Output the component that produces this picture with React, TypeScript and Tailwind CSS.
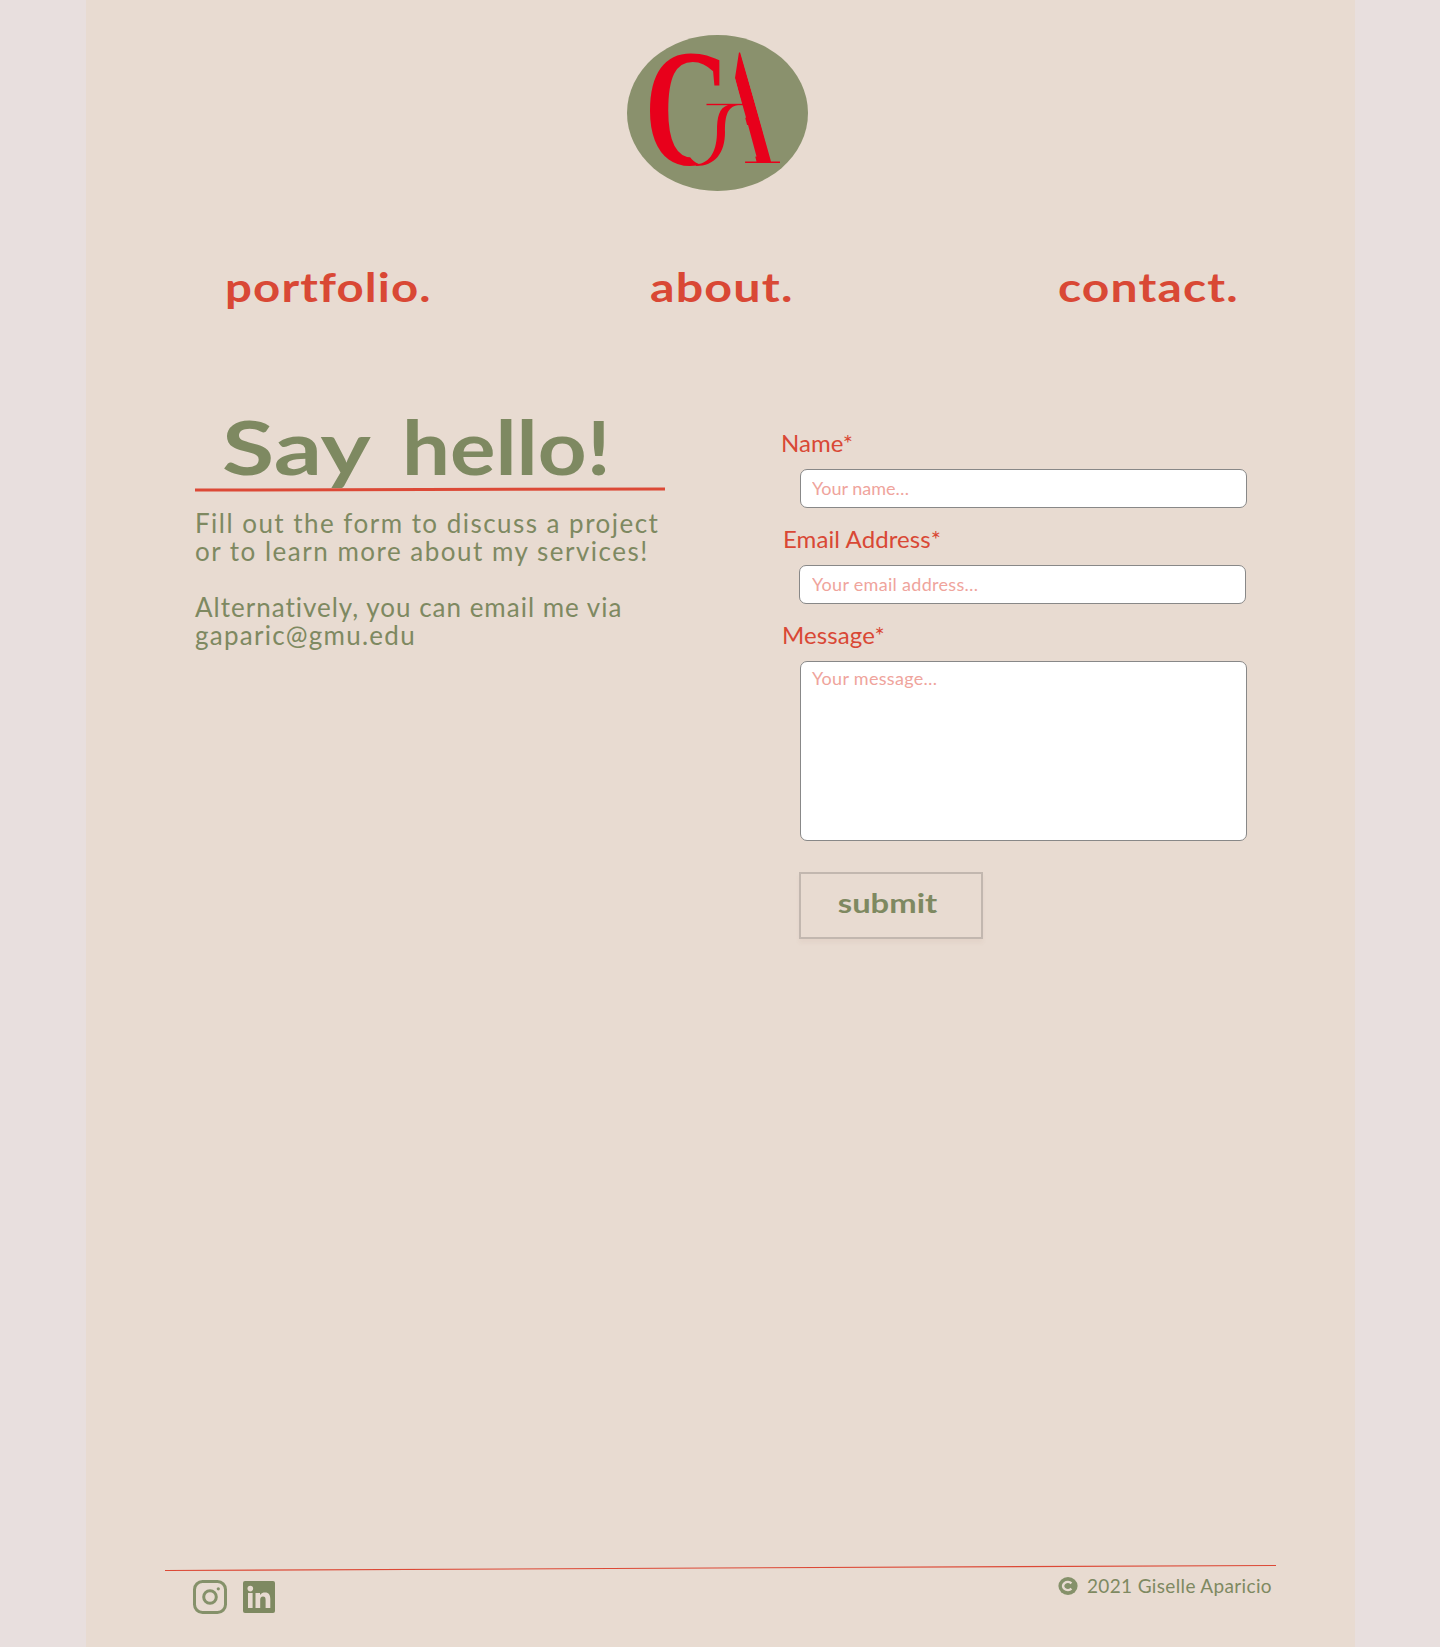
import React from "react";

function Monogram() {
  return (
    <svg viewBox="0 0 182 156" className="block h-[156px] w-[182px]" aria-label="GA">
      <defs>
        <clipPath id="bowl">
          <path d="M0 0H98V52H58V108C60 119 64 126 72 129V156H0Z" />
        </clipPath>
        <clipPath id="leg">
          <path d="M108 43L112 17H113.5L144 126.5H153V128.2H116V126.5H129.5L118 82Z" />
        </clipPath>
      </defs>
      <ellipse cx="90.5" cy="78" rx="90.5" ry="78" fill="#8a916d" />
      <g fill="#e8001b" fontFamily="Liberation Serif, serif">
        <g clipPath="url(#bowl)">
          <text transform="translate(17.5 129) scale(.67 1)" fontSize="168" fontWeight="700">G</text>
        </g>
        <g clipPath="url(#leg)">
          <text transform="translate(61 128) scale(.78 1)" fontSize="167">A</text>
        </g>
        <rect x="79.5" y="68.8" width="37" height="1.4" />
        <path d="M101 70H111C99 72 98 84 98 97C98 118 88 131 69 131V129.5C84 128 90 115 90 96C90 82 92 73 101 70Z" />
      </g>
    </svg>
  );
}

const display = "font-['Lato',sans-serif] whitespace-nowrap";

export default function App() {
  return (
    <div className="flex h-[1647px] w-[1440px] bg-[#e8dfde]">
      <main className="ml-[86px] flex h-full w-[1269px] flex-col bg-[#e8dbd1] text-[#7e8961]">
        <header className="pt-[35px]">
          <div className="pl-[541px]"><Monogram /></div>
          <nav className={`${display} mt-[66px] flex h-[60px] items-center pl-[139px] text-[41px] leading-[60px] font-bold text-[#d94835]`}>
            <a className="w-[425px]"><span className="inline-block origin-left scale-x-[1.155] tracking-[1px]">portfolio.</span></a>
            <a className="w-[408px]"><span className="inline-block origin-left scale-x-[1.18] tracking-[1px]">about.</span></a>
            <a><span className="inline-block origin-left scale-x-[1.17] tracking-[1px]">contact.</span></a>
          </nav>
        </header>

        <div className="flex h-[1248px] pt-[83px]">
          <section className="w-[579px] shrink-0 pl-[109px]">
            <h1 className={`${display} flex h-[88px] pl-[27px] text-[75px] leading-[92px] font-bold`}>
              <span className="w-[180px]"><span className="inline-block origin-left scale-x-[1.27]">Say</span></span>{" "}
              <span className="inline-block origin-left scale-x-[1.135]">hello!</span>
            </h1>
            <div className="h-[3px] w-[470px] -rotate-[0.14deg] bg-[#dc4936]" />
            <div className={`${display} mt-[18px] text-[26px] leading-[28px]`}>
              <p className="tracking-[1.47px]">Fill out the form to discuss a project</p>
              <p className="tracking-[1.5px]">or to learn more about my services!</p>
              <p className="mt-[28px] tracking-[1px]">Alternatively, you can email me via</p>
              <p className="tracking-[1.25px]">gaparic@gmu.edu</p>
            </div>
          </section>

          <form className="ml-[116px] flex w-[470px] flex-col pt-[28px] font-['Lato',sans-serif] text-[24px] leading-[30px] text-[#d94835]">
            <label>Name*</label>
            <input className="mt-[11px] ml-[19px] h-[39px] w-[447px] rounded-[7px] border border-[#888] bg-white px-[11px] pb-[2px] text-[18px] placeholder:text-[#efa49c] placeholder:opacity-100" placeholder="Your name…" />
            <label className="mt-[16px] pl-[2px] tracking-[0.1px]">Email Address*</label>
            <input className="mt-[11px] ml-[18px] h-[39px] w-[447px] rounded-[7px] border border-[#888] bg-white px-[12px] pb-[2px] text-[18px] tracking-[0.3px] placeholder:text-[#efa49c] placeholder:opacity-100" placeholder="Your email address…" />
            <label className="mt-[16px] pl-[1px] tracking-[0.1px]">Message*</label>
            <textarea className="mt-[11px] ml-[19px] h-[180px] w-[447px] resize-none rounded-[7px] border border-[#888] bg-white px-[11px] py-[1px] text-[18px] leading-[30px] tracking-[0.3px] placeholder:text-[#efa49c] placeholder:opacity-100" placeholder="Your message…" />
            <button type="button" className={`${display} mt-[31px] ml-[18px] h-[67px] w-[184px] border-2 border-[#c2b7af] pr-[8px] pb-[6px] text-[26px] font-bold text-[#7e8961] shadow-[0_4px_4px_rgba(150,110,90,0.06)]`}>
              <span className="inline-block scale-x-[1.26]">submit</span>
            </button>
          </form>
        </div>

        <footer className="-mt-[1px]">
          <svg viewBox="0 0 1111 8" className="ml-[79px] block h-[8px] w-[1111px]"><path d="M0 6.5L1111 1.5" stroke="#dc4936" strokeWidth="1.1" /></svg>
          <div className="mt-[8px] flex items-start pl-[107px]">
            <svg viewBox="0 0 34 34" className="h-[34px] w-[34px]" fill="none" stroke="#85916a">
              <rect x="1.5" y="1.5" width="31" height="31" rx="8" strokeWidth="3" />
              <circle cx="17" cy="17" r="6.3" strokeWidth="3" />
              <circle cx="25.3" cy="8.8" r="1.6" fill="#85916a" stroke="none" />
            </svg>
            <svg viewBox="0 0 32 32" className="mt-[1px] ml-[16px] h-[32px] w-[32px]">
              <rect width="32" height="32" rx="2" fill="#7e8961" />
              <g fill="#e8dbd1">
                <circle cx="7.3" cy="7.6" r="2.8" />
                <path d="M5 12H9.6V27H5Z M12.5 12H17V14C18.5 12 20 11.5 22 11.5C26 11.5 27.3 14 27.3 18V27H22.6V19C22.6 16.5 22 15.5 20 15.5C18 15.5 17.2 16.8 17.2 19V27H12.5Z" />
              </g>
            </svg>
            <svg viewBox="0 0 20 18" className="mt-[-3px] ml-[783px] h-[18px] w-[20px]">
              <ellipse cx="10" cy="9" rx="9.6" ry="9" fill="#85916a" />
              <path d="M13.4 6.3A4.8 4 0 1 0 13.4 11.7" fill="none" stroke="#e8dbd1" strokeWidth="2.5" />
            </svg>
            <p className={`${display} mt-[-7px] ml-[9px] text-[19px] leading-[26px] tracking-[0.35px]`}>2021 Giselle Aparicio</p>
          </div>
        </footer>
      </main>
    </div>
  );
}
